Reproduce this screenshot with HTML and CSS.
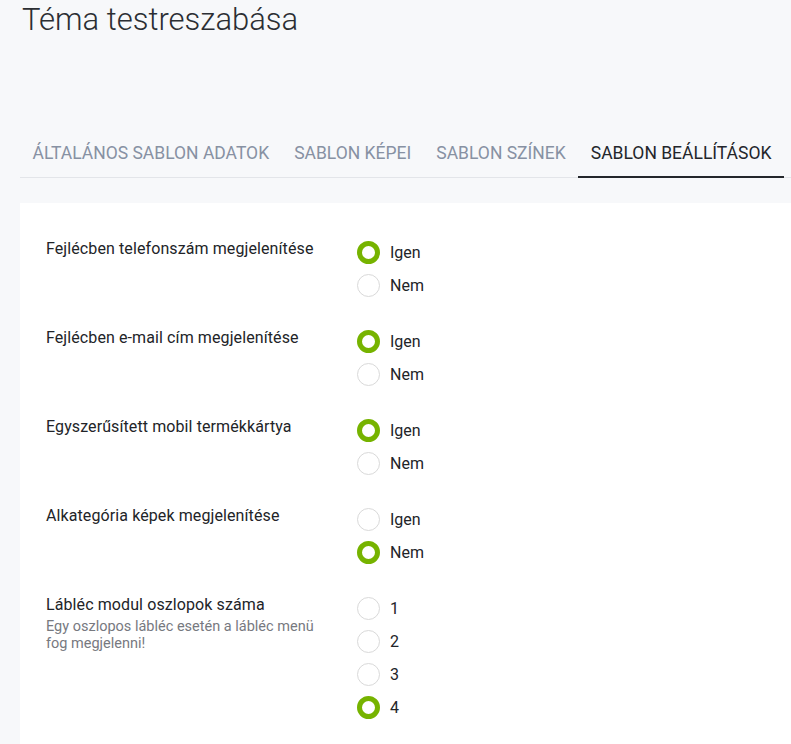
FILE: index.html
```html
<!DOCTYPE html>
<html lang="hu">
<head>
<meta charset="utf-8">
<title>Téma testreszabása</title>
<link rel="stylesheet" href="styles.css">
</head>
<body>
<div class="page">
  <h1 class="title">Téma testreszabása</h1>
  <nav class="tabs">
    <a class="tab">Általános sablon adatok</a>
    <a class="tab">Sablon képei</a>
    <a class="tab">Sablon színek</a>
    <a class="tab active">Sablon beállítások</a>
  </nav>
  <div class="panel">
    <div class="row">
      <div class="label"><div class="name">Fejlécben telefonszám megjelenítése</div></div>
      <div class="options">
        <label class="opt"><span class="radio checked"></span><span class="txt">Igen</span></label>
        <label class="opt"><span class="radio"></span><span class="txt">Nem</span></label>
      </div>
    </div>
    <div class="row">
      <div class="label"><div class="name">Fejlécben e-mail cím megjelenítése</div></div>
      <div class="options">
        <label class="opt"><span class="radio checked"></span><span class="txt">Igen</span></label>
        <label class="opt"><span class="radio"></span><span class="txt">Nem</span></label>
      </div>
    </div>
    <div class="row">
      <div class="label"><div class="name">Egyszerűsített mobil termékkártya</div></div>
      <div class="options">
        <label class="opt"><span class="radio checked"></span><span class="txt">Igen</span></label>
        <label class="opt"><span class="radio"></span><span class="txt">Nem</span></label>
      </div>
    </div>
    <div class="row">
      <div class="label"><div class="name">Alkategória képek megjelenítése</div></div>
      <div class="options">
        <label class="opt"><span class="radio"></span><span class="txt">Igen</span></label>
        <label class="opt"><span class="radio checked"></span><span class="txt">Nem</span></label>
      </div>
    </div>
    <div class="row">
      <div class="label">
        <div class="name">Lábléc modul oszlopok száma</div>
        <div class="desc">Egy oszlopos lábléc esetén a lábléc menü fog megjelenni!</div>
      </div>
      <div class="options">
        <label class="opt"><span class="radio"></span><span class="txt">1</span></label>
        <label class="opt"><span class="radio"></span><span class="txt">2</span></label>
        <label class="opt"><span class="radio"></span><span class="txt">3</span></label>
        <label class="opt"><span class="radio checked"></span><span class="txt">4</span></label>
      </div>
    </div>
  </div>
</div>
</body>
</html>
```
FILE: styles.css
```css
html, body {
  margin: 0;
  padding: 0;
  background: #f7f8fa;
  font-family: Roboto, "Noto Sans", sans-serif;
}
.page {
  padding-left: 20px;
}
.title {
  margin: 0;
  padding: 0 0 0 2px;
  font-size: 31px;
  font-weight: 300;
  line-height: 40px;
  color: #2b2e33;
  height: 122px;
}
.tabs {
  display: flex;
  border-bottom: 1px solid #e3e5e9;
  height: 56px;
  box-sizing: border-box;
}
.tab {
  display: block;
  padding: 19px 12.5px 0;
  font-size: 17.5px;
  line-height: 24px;
  text-transform: uppercase;
  color: #8791a3;
  box-sizing: border-box;
  height: 56px;
}
.tab.active {
  color: #23262b;
  border-bottom: 2px solid #23262b;
}
.panel {
  margin-top: 25px;
  background: #fff;
  padding: 33px 26px 20px;
  display: flex;
  flex-direction: column;
  gap: 23px;
}
.row {
  display: grid;
  grid-template-columns: 311px auto;
}
.label {
  padding-top: 3px;
}
.name {
  font-size: 16px;
  letter-spacing: 0.1px;
  line-height: 20px;
  color: #222428;
}
.desc {
  margin-top: 3px;
  font-size: 14.5px;
  line-height: 17px;
  color: #77797f;
  width: 290px;
}
.options {
  display: flex;
  flex-direction: column;
}
.opt {
  display: flex;
  align-items: center;
  height: 33px;
  gap: 10px;
}
.radio {
  width: 23px;
  height: 23px;
  box-sizing: border-box;
  border-radius: 50%;
  border: 1px solid #d9d9d9;
  background: #fff;
  flex: none;
}
.radio.checked {
  border: 5px solid #76b300;
}
.txt {
  font-size: 16px;
  color: #222428;
}
```
